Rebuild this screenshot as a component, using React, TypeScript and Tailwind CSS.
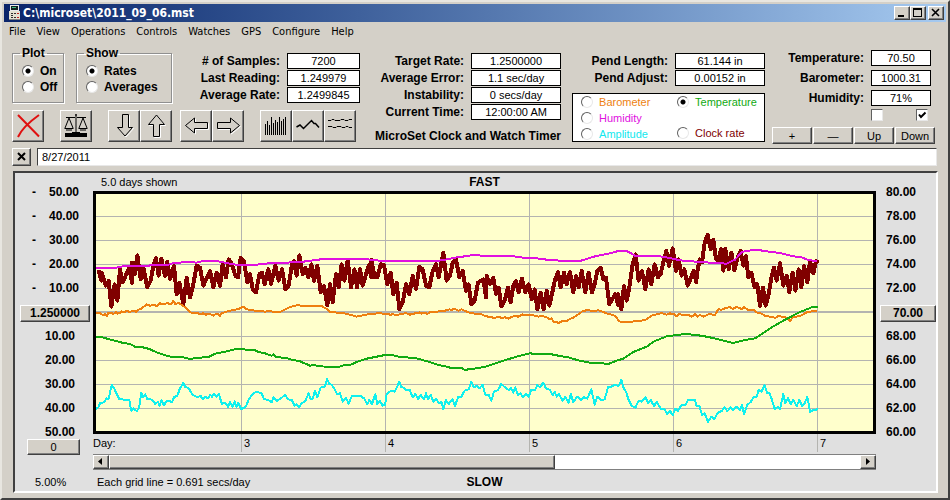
import type { ReactNode } from 'react';

const MENU = ['File', 'View', 'Operations', 'Controls', 'Watches', 'GPS', 'Configure', 'Help'];

const LEFT_SCALE = ['50.00', '40.00', '30.00', '20.00', '10.00', '1.250000', '10.00', '20.00', '30.00', '40.00', '50.00'];
const RIGHT_SCALE = ['80.00', '78.00', '76.00', '74.00', '72.00', '70.00', '68.00', '66.00', '64.00', '62.00', '60.00'];

const GRID_Y = [67.5, 139.5, 211.5, 283.5, 427.5, 499.5, 571.5, 643.5];
const GRID_X = [436.5, 868.5, 1300.5, 1732.5, 2164.5];

interface Section {
  dx: number;
  dy: number;
  data: string;
}

// each entry of the clock rate is x,high,low
const RATE: Section[] = [
  {
    dx: -48,
    dy: 93,
    data: '48,135,155 56,132,170 65,140,175 77,145,185 86,165,205 94,190,248 104,175,230 112,175,205 120,130,175 130,130,160 140,128,165 148,125,177 156,110,150 164,115,145 172,88,140 182,115,165 190,125,175 202,130,190 212,125,170 220,120,165 228,97,150 236,100,155 244,98,140 255,115,155 262,108,150 270,118,165 282,120,170 290,140,210 298,170,215 310,170,240 320,155,215 330,160,220 340,130,180 350,118,165 360,125,165 370,135,185 380,140,180 390,135,180 400,150,190 410,140,180 420,135,185 428,115,160 438,105,160 446,100,140 454,110,155 466,115,155 474,110,160 482,95,145 492,105,145 502,125,175 510,145,190 518,145,195 528,160,205 538,145,195 546,140,180 556,145,165 565,130,180 575,140,165 586,118,170 596,130,170 606,130,165 616,145,195 626,130,185 636,115,175 642,105,155 650,105,145 658,88,145 668,105,150 676,125,160 685,130,160 694,115,170 704,130,165 712,120,175 722,150,205 732,180,225 742,190,243 750,175,235',
  },
  {
    dx: 702,
    dy: 93,
    data: '8,180,220 18,145,190 26,155,180 35,115,170 45,120,160 53,102,150 63,130,190 73,130,175 81,130,190 90,130,185 98,130,180 107,120,155 116,118,160 124,102,150 134,115,160 142,120,160 152,115,155 162,118,155 172,135,180 182,140,180 190,165,210 200,170,220 208,190,256 218,190,235 228,175,220 238,170,210 248,150,200 258,145,195 268,122,165 278,130,180 288,135,185 298,150,190 308,135,170 318,115,160 330,115,150 340,80,135 350,115,170 360,115,155 368,110,150 378,100,155 388,125,160 398,135,180 408,150,200 416,175,220 424,190,241 434,175,230 444,170,210 452,170,205 460,160,220 470,150,180 480,150,180 490,155,185 498,165,210 506,185,215 514,200,247 524,190,230 534,185,225 542,190,235 550,180,220 558,165,200 566,170,205 576,158,195 586,175,205 596,175,205 605,190,225 614,190,235 622,210,256 632,200,245 641,215,256 650,195,235 658,205,245 666,170,210 674,165,205 684,138,175 692,150,190 702,140,180 712,150,175 720,138,175 730,150,205 738,150,190 746,150,180',
  },
  {
    dx: 1452,
    dy: 93,
    data: '5,135,190 16,150,205 26,140,180 36,150,205 44,150,180 52,135,175 62,125,160 70,135,165 78,155,195 88,190,240 96,210,235 106,205,243 114,205,235 124,215,256 132,180,230 142,180,205 148,122,190 158,115,150 167,85,145 176,120,170 186,135,170 196,145,195 206,130,180 214,135,180 224,115,160 234,125,160 242,110,150 252,100,130 259,75,125 268,75,120 278,67,110 288,90,140 296,100,145 305,120,155 313,130,175 323,135,185 332,140,175 341,135,175 350,110,155 359,100,135 366,60,115 374,50,85 383,26,70 392,40,75 400,42,80 408,65,105 415,75,110 423,70,105 430,90,140 436,68,110 446,85,135 454,80,120 463,95,138 474,90,125 482,75,125 490,75,115 498,90,140 505,130,160 514,140,180 524,160,190 532,175,210 540,180,246 549,185,230 557,190,245 566,160,210 575,150,200 582,125,170 590,125,155 600,112,150 610,140,185 620,150,190 628,150,205 638,140,185 646,140,200 656,130,190 664,130,175 672,120,165 682,125,175 690,105,145 700,120,148 708,105,115',
  },
];

const HUMIDITY: Section[] = [
  {
    dx: -48,
    dy: 93,
    data: '48,129 105,129 120,125 150,123 190,123 215,121 265,119 280,114 310,112 325,110 350,113 365,109 400,107 420,110 445,115 475,120 520,120 550,117 570,114 600,115 620,113 670,110 700,106 730,102',
  },
  {
    dx: 702,
    dy: 93,
    data: '110,102 125,105 160,108 320,108 345,104 380,97 405,94 430,90 470,93 550,94 580,98 620,100 650,104 690,107',
  },
  {
    dx: 1452,
    dy: 93,
    data: '0,108 20,102 45,94 85,86 115,78 140,78 155,86 165,93 235,93 270,99 300,106 360,111 440,116 465,104 485,82 500,77 520,76 535,74 550,78 600,84 640,94 665,97 685,105 712,109',
  },
];

const BAROMETER: Section[] = [
  {
    dx: -48,
    dy: 93,
    data: '48,264 60,265 68,270 75,268 80,273 84,265 95,264 100,267 108,262 112,266 120,264 125,259 132,262 140,258 150,261 160,257 168,260 175,254 183,251 190,246 200,238 210,242 220,240 232,243 240,235 250,238 262,234 272,238 280,228 286,237 296,234 305,240 318,248 325,256 335,264 350,264 360,267 370,265 378,269 388,266 400,272 408,266 416,268 420,272 424,265 440,260 455,256 470,253 480,250 490,245 500,253 515,255 530,258 550,258 555,261 562,257 575,259 585,262 600,261 610,256 625,248 640,243 655,240 665,243 680,242 700,243 725,243 740,252',
  },
  {
    dx: 702,
    dy: 93,
    data: '0,261 25,263 40,264 55,268 68,271 80,275 92,272 105,270 120,266 130,268 148,263 160,267 170,266 180,269 190,268 200,271 215,266 230,265 240,269 248,267 260,264 268,262 275,266 285,263 292,267 300,261 320,260 345,257 358,253 365,255 372,251 385,257 395,253 410,260 425,265 440,266 455,268 465,273 480,276 495,279 505,275 515,279 525,277 535,281 545,276 555,273 565,275 578,268 590,271 600,270 615,272 625,275 638,273 650,277 658,282 664,280 672,291 680,290 685,295 695,289 710,288 720,282 730,278 745,268',
  },
  {
    dx: 1452,
    dy: 93,
    data: '0,265 8,258 25,255 38,259 55,256 68,260 78,265 90,268 100,270 110,278 116,289 130,291 155,290 180,287 195,286 205,279 215,272 230,268 245,264 260,269 270,265 285,269 290,274 296,267 310,270 325,270 335,275 345,268 352,275 360,270 370,275 385,268 405,269 415,253 425,254 440,248 450,247 458,252 470,246 485,252 492,247 505,255 520,254 530,262 545,266 558,274 575,275 585,279 595,273 610,276 622,279 630,288 638,278 650,275 665,271 680,262 695,259 712,258',
  },
];

const TEMPERATURE: Section[] = [
  {
    dx: -48,
    dy: 393,
    data: '48,37 62,36 70,38 85,42 100,46 115,50 130,54 150,57 165,65 195,68 210,73 230,82 250,89 265,94 280,96 310,97 330,102 350,99 385,96 405,86 440,79 465,73 490,72 505,76 525,76 535,81 555,85 565,89 575,92 580,88 590,97 615,98 635,104 660,109 690,122 705,120 715,124 775,126 790,121 810,120 830,111 860,101 885,96 910,91 935,89 950,94 1010,100 1045,110 1075,120 1100,125',
  },
  {
    dx: 1062,
    dy: 318,
    data: '0,203 35,204 45,210 60,207 80,205 110,199 140,189 170,179 210,167 240,160 265,163 295,161 330,168 355,172 385,181 420,188 450,189 475,192 500,182 520,176 550,156 590,140 610,125 650,109 680,105 705,102 740,105 775,111 810,119 850,129 885,120 915,115 935,102 965,82 1000,62 1050,36 1085,22 1103,20',
  },
];

const AMPLITUDE: Section[] = [
  {
    dx: -48,
    dy: 393,
    data: '48,252 55,247 60,235 72,232 80,220 86,222 95,180 103,190 108,203 118,222 148,226 154,258 160,250 170,258 177,250 184,203 190,216 196,208 202,222 216,224 226,237 234,230 239,243 244,226 252,241 258,230 268,227 276,232 282,217 292,212 300,190 310,174 316,187 325,188 338,210 352,216 362,213 368,223 376,215 384,220 391,209 396,215 402,207 410,215 416,206 426,237 436,233 444,245 450,232 458,245 464,229 470,246 475,234 484,252 498,245 505,226 516,210 528,200 545,205 552,222 565,225 575,232 580,217 590,228 600,222 615,210 625,223 635,225 644,242 650,238 656,247 666,234 676,228 686,205 692,223 698,222 705,197 712,217 722,188 735,184 741,162 748,177 756,180 765,195 772,208 780,205 788,230 798,218 806,236 816,212 830,214 842,213 852,220 862,238 868,225 876,237 886,208 892,237 900,228 908,242 915,240 920,208 932,198 944,200 950,188 958,170 964,186 972,188 978,195 990,196 998,217 1006,207 1014,222 1022,210 1032,223 1038,205 1044,222 1052,210 1060,230 1068,222 1078,235 1084,230 1090,252 1098,225 1106,238',
  },
  {
    dx: 1062,
    dy: 318,
    data: '0,305 8,298 15,318 24,292 34,290 44,272 56,268 64,245 72,262 80,258 88,265 98,254 106,285 116,285 124,302 132,275 144,270 154,252 165,262 176,270 182,264 190,278 196,262 204,285 212,280 218,292 228,283 236,290 244,270 255,270 262,255 270,262 280,248 288,265 300,270 308,286 314,275 320,290 326,282 338,302 346,290 356,308 362,282 370,306 382,290 392,300 402,292 412,296 424,268 434,314 442,290 454,300 464,298 474,262 484,260 494,255 506,258 514,240 520,262 528,275 536,300 545,318 556,323 566,302 574,305 586,292 594,308 602,300 612,318 620,306 634,328 644,328 652,342 660,332 668,346 676,326 684,332 694,316 706,316 714,300 735,300 740,318 748,318 756,345 764,340 774,366 784,350 792,358 804,338 816,332 824,322 832,334 842,322 850,330 860,320 870,330 876,316 882,342 892,315 902,306 912,290 920,290 926,270 934,275 944,256 952,280 958,278 966,300 974,328 984,320 990,328 1000,282 1006,310 1014,295 1022,312 1030,300 1040,318 1048,300 1056,318 1064,310 1072,290 1080,335 1090,330 1103,328',
  },
];

function parse({ dx, dy, data }: Section) {
  return data.split(' ').map((entry) => {
    const [x, ...ys] = entry.split(',').map(Number);
    return [x + dx, ...ys.map((y) => y + dy)];
  });
}

function toPoints(sections: Section[]) {
  return sections.flatMap(parse).map((p) => p.join(',')).join(' ');
}

// one spike for every two entries: the highest high and the lowest low
function toSpikes(sections: Section[]) {
  const rows = sections.flatMap(parse);
  const points: number[][] = [];
  for (let i = 0; i < rows.length; i += 2) {
    const a = rows[i];
    const b = rows[i + 1] ?? a;
    const top = a[1] <= b[1] ? a : b;
    const bottom = a[2] > b[2] ? a : b;
    const high = [top[0], top[1] + 3];
    const low = [top === bottom ? bottom[0] + 8 : bottom[0], bottom[2] - 3];
    points.push(...(high[0] <= low[0] ? [high, low] : [low, high]));
  }
  return points.map((p) => p.join(',')).join(' ');
}

const LINES = [
  { color: '#800000', width: 4, points: toSpikes(RATE) },
  { color: '#ee7f10', width: 2, points: toPoints(BAROMETER) },
  { color: '#e010e0', width: 2, points: toPoints(HUMIDITY) },
  { color: '#12aa12', width: 2, points: toPoints(TEMPERATURE) },
  { color: '#10f0ee', width: 2, points: toPoints(AMPLITUDE) },
];

const RAISED = 'border border-t-white border-l-white border-r-[#404040] border-b-[#404040] bg-[#d4d0c8] shadow-[inset_-1px_-1px_0_#808080]';
const RADIO =
  'm-0 size-3 shrink-0 appearance-none rounded-full border border-t-[#606060] border-l-[#606060] border-r-[#e8e8e8] border-b-[#e8e8e8] bg-white checked:bg-[radial-gradient(circle,#000_2px,#fff_3px)]';

function Field({ id, label, value, width }: { id: string; label: string; value: string; width: string }) {
  return (
    <div className="flex items-center justify-end gap-[7px]">
      <label htmlFor={id} className="text-xs leading-4 font-bold whitespace-nowrap">{label}</label>
      <input id={id} readOnly defaultValue={value} className={`h-4 border border-black bg-white p-0 text-center text-[11px] leading-[14px] ${width}`} />
    </div>
  );
}

function ToolButton({ label, children }: { label: string; children: ReactNode }) {
  return (
    <button type="button" aria-label={label} className={`size-8 ${RAISED}`}>
      <svg viewBox="1 1 30 30" className="block size-[30px]" fill="none" stroke="#000">
        {children}
      </svg>
    </button>
  );
}

function Arrow({ d }: { d: string }) {
  return (
    <>
      <path d={d} stroke="#fff" transform="translate(1 1)" />
      <path d={d} fill="#d4d0c8" />
    </>
  );
}

function GroupRadio({ name, label, checked }: { name: string; label: string; checked?: boolean }) {
  return (
    <label className="flex h-4 items-center gap-[6px] text-xs font-bold">
      <input type="radio" name={name} defaultChecked={checked} className={RADIO} />
      {label}
    </label>
  );
}

function ScaleRadio({ label, color, checked }: { label: string; color: string; checked?: boolean }) {
  return (
    <label className={`flex h-4 items-center gap-[6px] text-[11px] ${color}`}>
      <input type="radio" name="scale" defaultChecked={checked} className={RADIO} />
      {label}
    </label>
  );
}

function TickBox({ label, checked }: { label: string; checked?: boolean }) {
  return (
    <label className="relative block size-3">
      <input
        type="checkbox"
        aria-label={label}
        defaultChecked={checked}
        className="peer m-0 block size-3 appearance-none border border-t-[#606060] border-l-[#606060] border-r-[#e8e8e8] border-b-[#e8e8e8] bg-white"
      />
      <svg viewBox="0 0 12 12" className="pointer-events-none absolute inset-0 hidden size-3 peer-checked:block">
        <path d="M3 5.5 L5 8 L9.5 3.5" fill="none" stroke="#000" strokeWidth="2" />
      </svg>
    </label>
  );
}

function TitleBar() {
  return (
    <header className="flex h-[18px] items-center bg-linear-to-r from-[#0a246a] to-[#a6caf0] pr-0.5 pl-[3px]">
      <svg viewBox="0 0 16 16" className="size-4">
        <path d="M3 0h9v6H3z" fill="#e8e8e8" />
        <path d="M4 1h7v4H4z" fill="#102020" />
        <path d="M5 2h4v1H5z" fill="#40c080" />
        <path d="M2 6h11v9H2z" fill="#e4e0d0" />
        <path d="M4 8h2v1H4zM7 8h2v1H7zM4 10h2v1H4zM7 12h2v1H7zM4 12h2v1H4z" fill="#303030" />
        <path d="M10 8h2v1h-2zM10 12h2v1h-2z" fill="#c02020" />
        <path d="M2 14h11v1H2z" fill="#808080" />
      </svg>
      <h1 className="grow font-['DejaVu_Sans_Condensed','Liberation_Sans',sans-serif] text-xs font-bold text-white">C:\microset\2011_09_06.mst</h1>
      <div className="flex">
        <button type="button" aria-label="Minimize" className={`h-[14px] w-4 ${RAISED}`}>
          <svg viewBox="0 0 14 12" className="block h-3 w-[14px]"><path d="M3 8h6v2H3z" /></svg>
        </button>
        <button type="button" aria-label="Maximize" className={`h-[14px] w-4 ${RAISED}`}>
          <svg viewBox="0 0 14 12" className="block h-3 w-[14px]"><path d="M2 1h9v9H2zM3 3v6h7V3z" fillRule="evenodd" /></svg>
        </button>
        <button type="button" aria-label="Close" className={`ml-0.5 h-[14px] w-4 ${RAISED}`}>
          <svg viewBox="0 0 14 12" className="block h-3 w-[14px]"><path d="M3 2l7 7M10 2l-7 7" stroke="#000" strokeWidth="1.6" /></svg>
        </button>
      </div>
    </header>
  );
}

function Toolbar() {
  return (
    <div className="flex">
      <ToolButton label="Stop">
        <path d="M6 5L27 26.5M27 5C20 10 10 18 6 27" stroke="#e01010" strokeWidth="2" />
      </ToolButton>
      <div className="ml-4 flex">
        <ToolButton label="Balance">
          <path d="M6 7.5h9M17 7.5h9M16 4v18M15 5h2M9 8l-4 10M9 8l4 10M23 8l-4 10M23 8l4 10M4.5 18.5h9M18.5 18.5h9M6 20h6M20 20h6M12 22.5h8" />
          <path d="M5 23h22v4H5z" fill="#000" stroke="none" />
        </ToolButton>
      </div>
      <div className="ml-4 flex">
        <ToolButton label="Move down"><Arrow d="M14.5 4.5h6v13h4l-7.5 8.5l-7.500-8.500h5z" /></ToolButton>
        <ToolButton label="Move up"><Arrow d="M13.5 26.5h6v-12h5l-8-9.5l-8 9.5h5z" /></ToolButton>
      </div>
      <div className="ml-2 flex">
        <ToolButton label="Move left"><Arrow d="M27.5 12.5v6h-13v4.5l-9-7.5l9-7.5v4.5z" /></ToolButton>
        <ToolButton label="Move right"><Arrow d="M5.5 12.5v6h13v4.5l9-7.5l-9-7.5v4.5z" /></ToolButton>
      </div>
      <div className="ml-4 flex">
        <ToolButton label="Bars">
          <path d="M5.5 14v11M7.5 11v14M9.5 15v10M11.5 7v18M13.5 13v12M15.5 10v15M17.5 12v13M19.5 7v18M21.5 11v14M23.5 9v16M25.5 7v18" />
        </ToolButton>
        <ToolButton label="Line">
          <path d="M4.5 17L8 15L11.5 18.5L19.5 10.5L22 13.5L23.5 13.5L27 17.5" strokeWidth="1.5" />
        </ToolButton>
        <ToolButton label="Averages">
          <path d="M4 10.5h3l1-1h2l1 1h5l1-1h3l1 1h3l1-1h3M4 16.5h4l1 1h3l1-1h4l1 1h3l1-1h2l1 1h3" />
        </ToolButton>
      </div>
    </div>
  );
}

function ControlPanel() {
  return (
    <section className="flex pt-1 pr-[11px] pl-2">
      <div>
        <div className="flex h-[57px] items-end">
          <fieldset className="h-14 w-[52px] border border-[#909090] pl-[9px] shadow-[1px_1px_0_#fff,inset_1px_1px_0_#fff]">
            <legend className="-ml-[2px] px-0.5 text-xs leading-[13px] font-bold">Plot</legend>
            <div className="pt-[3px]">
              <GroupRadio name="plot" label="On" checked />
              <GroupRadio name="plot" label="Off" />
            </div>
          </fieldset>
          <fieldset className="ml-3 h-14 w-24 border border-[#909090] pl-[9px] shadow-[1px_1px_0_#fff,inset_1px_1px_0_#fff]">
            <legend className="-ml-[2px] px-0.5 text-xs leading-[13px] font-bold">Show</legend>
            <div className="pt-[3px]">
              <GroupRadio name="show" label="Rates" checked />
              <GroupRadio name="show" label="Averages" />
            </div>
          </fieldset>
          <div className="flex w-[188px] flex-col gap-px">
            <Field id="samples" label="# of Samples:" value="7200" width="w-[73px]" />
            <Field id="last" label="Last Reading:" value="1.249979" width="w-[73px]" />
            <Field id="rate" label="Average Rate:" value="1.2499845" width="w-[73px]" />
          </div>
        </div>
        <div className="mt-[7px]">
          <Toolbar />
        </div>
      </div>

      <div className="ml-[15px] pt-[7px]">
        <div className="flex flex-col gap-px">
          <Field id="target" label="Target Rate:" value="1.2500000" width="w-[90px]" />
          <Field id="error" label="Average Error:" value="1.1 sec/day" width="w-[90px]" />
          <Field id="instability" label="Instability:" value="0 secs/day" width="w-[90px]" />
          <Field id="time" label="Current Time:" value="12:00:00 AM" width="w-[90px]" />
        </div>
        <p className="mt-2 text-right text-xs leading-4 font-bold whitespace-nowrap">MicroSet Clock and Watch Timer</p>
      </div>

      <div className="ml-[11px] w-[193px] pt-[7px]">
        <div className="flex flex-col gap-px">
          <Field id="length" label="Pend Length:" value="61.144 in" width="w-[90px]" />
          <Field id="adjust" label="Pend Adjust:" value="0.00152 in" width="w-[90px]" />
        </div>
        <div className="mt-[7px] flex h-[49px] border border-black bg-white pl-2">
          <div className="w-24">
            <ScaleRadio label="Barometer" color="text-[#ee7f10]" />
            <ScaleRadio label="Humidity" color="text-[#e010e0]" />
            <ScaleRadio label="Amplitude" color="text-[#10e8ee]" />
          </div>
          <div className="flex flex-col justify-between">
            <ScaleRadio label="Temperature" color="text-[#12aa12]" checked />
            <ScaleRadio label="Clock rate" color="text-[#800000]" />
          </div>
        </div>
      </div>

      <div className="ml-auto pt-1">
        <div className="flex flex-col gap-1 pr-1">
          <Field id="temperature" label="Temperature:" value="70.50" width="w-[60px]" />
          <Field id="barometer" label="Barometer:" value="1000.31" width="w-[60px]" />
          <Field id="humidity" label="Humidity:" value="71%" width="w-[60px]" />
        </div>
        <div className="mt-[3px] flex justify-end gap-[33px] pr-[7px]">
          <TickBox label="Show inside" />
          <TickBox label="Show outside" checked />
        </div>
        <div className="mt-[6px] flex gap-px text-[11px] leading-[14px]">
          <button type="button" className={`h-[17px] w-10 ${RAISED}`}>+</button>
          <button type="button" className={`h-[17px] w-10 ${RAISED}`}>—</button>
          <button type="button" className={`h-[17px] w-10 ${RAISED}`}>Up</button>
          <button type="button" className={`h-[17px] w-10 ${RAISED}`}>Down</button>
        </div>
      </div>
    </section>
  );
}

function Plot() {
  return (
    <div className="h-[243px] border-[3px] border-black bg-[#ffffcc]">
      <svg viewBox="0 0 2331 711" preserveAspectRatio="none" className="block h-[237px] w-full" fill="none">
        <g stroke="#b4b4b0" strokeWidth="3">
          {GRID_Y.map((y) => <line key={y} x1="0" x2="2331" y1={y} y2={y} />)}
          {GRID_X.map((x) => <line key={x} x1={x} x2={x} y1="0" y2="711" />)}
          <line x1="0" x2="2331" y1="354" y2="354" strokeWidth="6" />
        </g>
        {LINES.map((line) => (
          <polyline
            key={line.color}
            points={line.points}
            stroke={line.color}
            strokeWidth={line.width}
            strokeLinejoin="round"
            shapeRendering="crispEdges"
            vectorEffect="non-scaling-stroke"
          />
        ))}
      </svg>
    </div>
  );
}

function ChartPanel() {
  return (
    <section className="mt-[5px] mr-2 ml-[9px] grid grid-cols-[78px_1fr_60px] border-2 border-t-[#404040] border-l-[#404040] border-r-white border-b-white bg-[#e0e0e0] text-[11px]">
      <div className="pt-3">
        {LEFT_SCALE.map((value, i) => {
          if (i === 5) {
            return (
              <div key={i} className="h-6 pl-[5px]">
                <button type="button" className={`h-[17px] w-[70px] text-xs leading-[15px] font-bold ${RAISED}`}>{value}</button>
              </div>
            );
          }
          return (
            <div key={i} className={`flex justify-between pl-[17px] text-xs leading-[14px] font-bold ${i < 5 ? 'pr-[14px]' : 'pr-[18px]'} ${i === 10 ? 'h-[14px]' : 'h-6'}`}>
              <span>{i < 5 ? '-' : ''}</span>
              <span>{value}</span>
            </div>
          );
        })}
        <button type="button" className={`ml-3 block h-4 w-[53px] leading-[14px] ${RAISED}`}>0</button>
        <p className="mt-[19px] pl-5 leading-4">5.00%</p>
      </div>

      <div>
        <div className="grid h-[18px] grid-cols-3 items-center">
          <span className="pl-2">5.0 days shown</span>
          <span className="text-center text-xs font-bold">FAST</span>
        </div>
        <Plot />
        <div className="mb-0.5 grid h-[18px] grid-cols-[148fr_144fr_144fr_144fr_144fr_59fr] leading-[18px]">
          <span>Day:</span>
          {[3, 4, 5, 6, 7].map((day) => <span key={day} className="border-l border-[#b4b4b0] pl-0.5">{day}</span>)}
        </div>
        <div className="flex h-4 border-y border-[#808080] bg-white">
          <button type="button" aria-label="Scroll left" className={`w-4 ${RAISED}`}>
            <svg viewBox="0 0 14 12" className="block h-3 w-[14px]"><path d="M8 2v7L4 5.5z" /></svg>
          </button>
          <div className={`w-[57%] ${RAISED}`} />
          <button type="button" aria-label="Scroll right" className={`ml-auto w-4 ${RAISED}`}>
            <svg viewBox="0 0 14 12" className="block h-3 w-[14px]"><path d="M5 2v7l4-3.5z" /></svg>
          </button>
        </div>
        <div className="mt-1 mb-px grid h-4 grid-cols-3 items-center whitespace-nowrap">
          <span className="pl-1">Each grid line = 0.691 secs/day</span>
          <span className="text-center text-xs font-bold">SLOW</span>
        </div>
      </div>

      <div className="pt-3 text-xs leading-[14px] font-bold">
        {RIGHT_SCALE.map((value, i) => (
          <div key={i} className="h-6">
            {i === 5 ? (
              <button type="button" className={`ml-1 h-[17px] w-14 leading-[15px] ${RAISED}`}>{value}</button>
            ) : (
              <span className="pl-[10px]">{value}</span>
            )}
          </div>
        ))}
      </div>
    </section>
  );
}

export default function App() {
  return (
    <main className="border-2 border-t-[#e8e6e0] border-l-[#e8e6e0] border-r-[#404040] border-b-[#404040] bg-[#d4d0c8] px-0.5 pt-0.5 pb-[5px] font-['Liberation_Sans',sans-serif] text-black">
      <TitleBar />
      <nav className="flex h-5 items-center gap-[11px] pl-[5px] font-['DejaVu_Sans_Condensed','Liberation_Sans',sans-serif] text-[11px]">
        {MENU.map((item) => <button key={item} type="button">{item}</button>)}
      </nav>
      <ControlPanel />
      <div className="mt-1 flex items-center gap-[6px] pr-[9px] pl-2">
        <button type="button" aria-label="Clear note" className={`h-[18px] w-[19px] ${RAISED}`}>
          <svg viewBox="0 0 17 16" className="block h-4 w-[17px]"><path d="M5 4l7 7M12 4l-7 7" stroke="#000" strokeWidth="2" /></svg>
        </button>
        <input
          aria-label="Note"
          defaultValue="8/27/2011"
          className="h-[18px] grow border border-t-[#404040] border-l-[#404040] border-r-[#e8e8e8] border-b-[#e8e8e8] bg-white pl-1 text-[11px]"
        />
      </div>
      <ChartPanel />
    </main>
  );
}
